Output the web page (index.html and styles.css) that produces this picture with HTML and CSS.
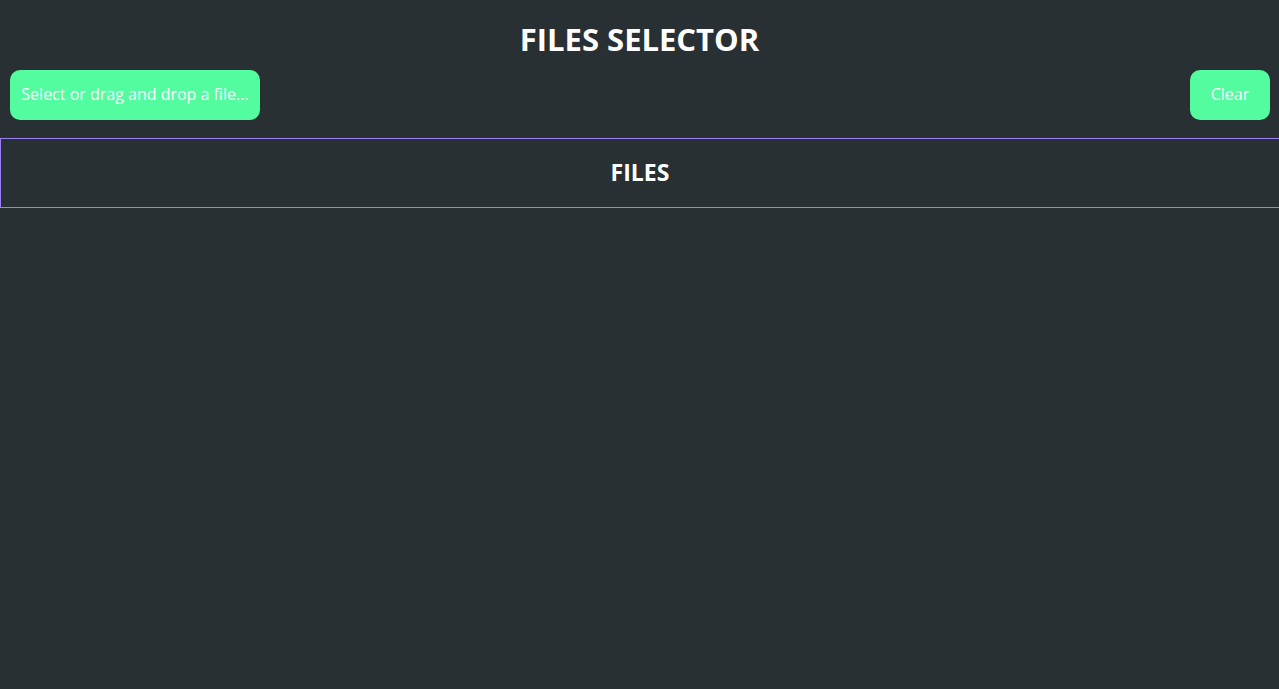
FILE: index.html
```html
<!DOCTYPE html>
<html lang="en">
<head>
<meta charset="utf-8">
<title>Files Selector</title>
<link rel="stylesheet" href="styles.css">
</head>
<body>
<main class="app">
  <h1 class="title">FILES SELECTOR</h1>
  <div class="toolbar">
    <label class="btn btn-select">Select or drag and drop a file...</label>
    <button class="btn btn-clear" type="button">Clear</button>
  </div>
  <section class="files">
    <h2 class="files-title">FILES</h2>
  </section>
</main>
</body>
</html>
```

FILE: styles.css
```css
html, body {
  margin: 0;
  padding: 0;
  background: #293033;
  height: 100%;
  overflow: hidden;
}
body {
  font-family: "Open Sans", "DejaVu Sans", sans-serif;
  color: #ffffff;
}
.app {
  display: flex;
  flex-direction: column;
}
.title {
  margin: 0;
  height: 70px;
  display: flex;
  align-items: center;
  justify-content: center;
  font-size: 31px;
  font-weight: 700;
  padding-top: 7px;
  box-sizing: border-box;
}
.toolbar {
  display: flex;
  justify-content: space-between;
  padding: 0 9px 0 10px;
  height: 50px;
}
.btn {
  background: #52fc9f;
  color: #ffffff;
  border: none;
  border-radius: 10px;
  height: 50px;
  display: flex;
  align-items: center;
  justify-content: center;
  font-family: inherit;
  font-size: 16px;
  padding: 0 0 2px;
  box-sizing: border-box;
  cursor: pointer;
}
.btn-select {
  width: 250px;
}
.btn-clear {
  width: 80px;
}
.files {
  margin-top: 18px;
  height: 70px;
  box-sizing: border-box;
  border: 1px solid #9a80f2;
  border-right: 0;
  display: flex;
  align-items: center;
  justify-content: center;
  padding-bottom: 2px;
}
.files-title {
  margin: 0;
  font-size: 23px;
  font-weight: 700;
}
```
